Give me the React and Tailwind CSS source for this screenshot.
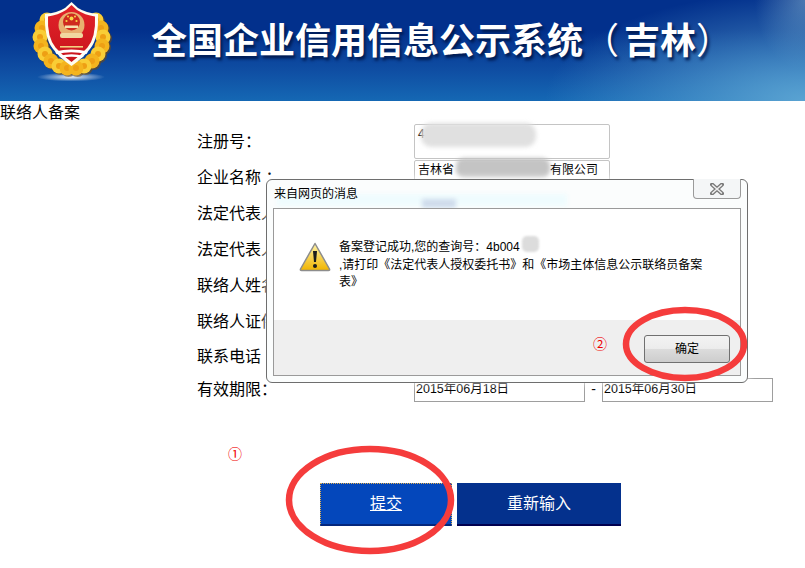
const fields = [
  { label: '注册号：', h: 'h-[36px]', box: 'h-[35px] self-start', text: '4' },
  { label: '企业名称 ：', h: 'h-[36px]', box: 'h-[34px] self-start', text: '吉林省' },
  { label: '法定代表人姓名：', h: 'h-[36px]', box: 'h-[26px]', text: '' },
  { label: '法定代表人证件号：', h: 'h-[36px]', box: 'h-[26px]', text: '' },
  { label: '联络人姓名：', h: 'h-[36px]', box: 'h-[26px]', text: '' },
  { label: '联络人证件号：', h: 'h-[36px]', box: 'h-[26px]', text: '' },
  { label: '联系电话', h: 'h-[34px]', box: 'h-[26px]', text: '' },
]

function Emblem() {
  const leaves = [
    [47, 20], [42, 28], [40, 37], [41, 46], [45, 54], [51, 61], [59, 66], [67, 68],
    [96, 20], [101, 28], [103, 37], [102, 46], [98, 54], [92, 61], [84, 66], [76, 68],
  ]
  return (
    <svg width="150" height="101" viewBox="0 0 150 101" className="shrink-0">
      <defs>
        <radialGradient id="glow">
          <stop offset="0%" stopColor="#ffffff" stopOpacity="0.9" />
          <stop offset="100%" stopColor="#ffffff" stopOpacity="0" />
        </radialGradient>
        <linearGradient id="shield" x1="0" y1="0" x2="0" y2="1">
          <stop offset="0%" stopColor="#e2232a" />
          <stop offset="100%" stopColor="#c8141c" />
        </linearGradient>
      </defs>
      <ellipse cx="71" cy="77" rx="34" ry="4.5" fill="url(#glow)" />
      {leaves.map(([x, y], i) => (
        <circle key={i} cx={x + 1.5} cy={y + 1.5} r="7.5" fill="#7a4a08" opacity="0.55" />
      ))}
      {leaves.map(([x, y], i) => (
        <g key={i}>
          <circle cx={x} cy={y} r="7.5" fill={i % 2 ? '#f4b41e' : '#f9cd36'} />
          <circle cx={x} cy={y} r="3" fill="#ee9f14" />
        </g>
      ))}
      <path d="M71.5 2 L78 8 Q86 13 98 14 Q99 38 90 49 Q82 59 71.5 66 Q61 59 53 49 Q44 38 45 14 Q57 13 65 8 Z" fill="#fffdf0" />
      <path d="M71.5 5 L77 10 Q85 15 95 16.5 Q96 37 87.5 47.5 Q80 56 71.5 62 Q63 56 55.5 47.5 Q47 37 48 16.5 Q58 15 66 10 Z" fill="url(#shield)" />
      <circle cx="71.5" cy="25" r="13" fill="#e8b070" />
      <circle cx="71.5" cy="22" r="8.5" fill="#cf2a1e" />
      <circle cx="71.5" cy="18.5" r="2" fill="#f8d84a" />
      <circle cx="66.5" cy="21" r="1.1" fill="#f8d84a" />
      <circle cx="76.5" cy="21" r="1.1" fill="#f8d84a" />
      <circle cx="68" cy="16.5" r="1" fill="#f8d84a" />
      <circle cx="75" cy="16.5" r="1" fill="#f8d84a" />
      <rect x="65" y="25.5" width="13" height="2.5" fill="#f6e2b0" />
      <rect x="60" y="33" width="23" height="5" rx="2" fill="#f1d8a0" />
      <rect x="60" y="46" width="23" height="1.6" fill="#f4d080" />
      <path d="M55 51.5 Q71.5 47.5 88 51.5 L86.5 54 Q71.5 50.5 56.5 54 Z" fill="#fff" />
      <path d="M59 56 Q71.5 52.5 84 56 L81.5 58 Q71.5 55.5 61.5 58 Z" fill="#fff" />
    </svg>
  )
}

function WarningIcon() {
  return (
    <svg width="32" height="30" viewBox="0 0 32 30" className="shrink-0">
      <defs>
        <linearGradient id="warn" x1="0" y1="0" x2="0" y2="1">
          <stop offset="0%" stopColor="#fff3a8" />
          <stop offset="100%" stopColor="#f0b400" />
        </linearGradient>
      </defs>
      <path d="M16 1.5 L30.5 27 Q31 28.5 29.5 28.5 L2.5 28.5 Q1 28.5 1.5 27 Z" fill="url(#warn)" stroke="#8d8d8d" strokeWidth="1.5" strokeLinejoin="round" />
      <path d="M14 9 L18 9 L17 20 L15 20 Z" fill="#1c1c1c" />
      <circle cx="16" cy="24" r="2" fill="#1c1c1c" />
    </svg>
  )
}

function CloseIcon() {
  return (
    <svg width="14" height="12" viewBox="0 0 14 12">
      <path d="M2 1.5 L12 10.5 M12 1.5 L2 10.5" stroke="#777" strokeWidth="4" strokeLinecap="round" />
      <path d="M2.5 2 L11.5 10 M11.5 2 L2.5 10" stroke="#eee" strokeWidth="1.6" strokeLinecap="round" />
    </svg>
  )
}

function Dialog() {
  return (
    <div className="absolute left-[266px] top-[179px] w-[482px] h-[204px] rounded-[6px] border border-[#6e6e6e] bg-[#fbfdfd] shadow-[0_0_8px_rgba(255,255,255,0.9)] flex flex-col px-[6px] pb-[6px]">
      {/* 玻璃边框透出的底色 */}
      <span className="absolute left-[10px] top-[14px] w-[290px] h-[12px] bg-[#effcfe] blur-[2px]"></span>
      <span className="absolute left-[155px] top-[19px] w-[34px] h-[9px] bg-[#cfdcec] blur-[2px]"></span>
      <div className="relative h-[28px] flex items-start justify-between">
        <span className="text-[12px] leading-[16px] mt-[6px] ml-px text-black">来自网页的消息</span>
        <div className="w-[48px] h-[20px] -mt-px border border-t-0 border-[#9a9a9a] rounded-b-[4px] bg-[#f4f6f7] flex items-center justify-center">
          <CloseIcon />
        </div>
      </div>
      <div className="relative flex-1 border border-[#9a9a9a] bg-white flex flex-col">
        <div className="h-[111px] flex items-start pl-[25px] pt-[33px] gap-[8px]">
          <WarningIcon />
          <p className="text-[12px] leading-[17.5px] text-black relative -mt-[3px]">
            备案登记成功,您的查询号：4b004
            <span className="absolute left-[183px] top-[-3px] w-[17px] h-[16px] rounded-[5px] bg-[#dcdcdc] blur-[1px]"></span>
            <br />
            ,请打印《法定代表人授权委托书》和《市场主体信息公示联络员备案
            <br />
            表》
          </p>
        </div>
        <div className="flex-1 bg-[#efefef] flex items-center justify-end pr-[10px] pt-[2px] gap-[37px]">
          <span className="text-[14px] leading-none text-[#f00000] -mt-[10px]">②</span>
          <button className="w-[86px] h-[28px] rounded-[3px] border border-[#707070] bg-[linear-gradient(#f3f3f3_0%,#ececec_48%,#dcdcdc_50%,#cdcdcd_100%)] text-[12px] text-black">
            确定
          </button>
        </div>
      </div>
    </div>
  )
}

export default function App() {
  return (
    <div className="relative w-[805px] h-[568px] overflow-hidden bg-white text-black font-['Liberation_Sans','Noto_Sans_CJK_SC',sans-serif]">
      {/* 顶部横幅 */}
      <div className="h-[101px] flex items-center bg-[radial-gradient(ellipse_260px_110px_at_100%_100%,#5aa3d2_0%,rgba(90,163,210,0)_100%),radial-gradient(ellipse_50px_70px_at_100%_0%,#4a74ae_0%,rgba(74,116,174,0)_100%),linear-gradient(180deg,#02308c_0%,#02308c_30%,#0f4ea3_70%,#1568b4_100%)]">
        <Emblem />
        <h1 className="ml-[1px] -mt-[18px] text-[36px] leading-[44px] font-bold text-white whitespace-nowrap [text-shadow:2px_3px_3px_#001a50]">
          全国企业信用信息公示系统<span className="font-normal">（</span><span className="ml-[5px]">吉林</span><span className="font-normal">）</span>
        </h1>
      </div>

      <div className="h-[23px] text-[16px] leading-[23px]">联络人备案</div>

      {/* 表单 */}
      <div className="pl-[197px]">
        {fields.map((f) => (
          <div key={f.label} className={`flex items-center ${f.h}`}>
            <div className="w-[217px] text-[16px] whitespace-nowrap">{f.label}</div>
            <div className={`relative w-[196px] border border-[#c4c4c4] rounded-[2px] px-[3px] text-[12px] leading-[18px] ${f.box}`}>
              {f.text}
              {f.text === '4' && (
                <span className="absolute left-[6px] top-[-2px] w-[115px] h-[24px] rounded-[10px] bg-[#e0e0e0] blur-[2px]"></span>
              )}
              {f.text === '吉林省' && (
                <>
                  <span className="absolute left-[41px] top-[-3px] w-[94px] h-[20px] rounded-[8px] bg-[#c4c4c4] blur-[2px]"></span>
                  <span className="absolute left-[135px] top-0">有限公司</span>
                </>
              )}
            </div>
          </div>
        ))}
        <div className="flex items-center h-[31px]">
          <div className="w-[217px] text-[16px]">有效期限：</div>
          <div className="w-[171px] h-[24px] mt-[1px] border border-[#9e9e9e] px-px pt-px text-[12.5px] leading-[18px]">2015年06月18日</div>
          <div className="w-[17px] text-center text-[14px]">-</div>
          <div className="w-[171px] h-[24px] mt-[1px] border border-[#9e9e9e] px-px pt-px text-[12.5px] leading-[18px]">2015年06月30日</div>
        </div>
      </div>

      <div className="pl-[228px] mt-[39px] h-[39px] text-[14px] leading-[20px] text-[#f00000]">①</div>

      {/* 按钮 */}
      <div className="flex pl-[320px] gap-[5px]">
        <button className="w-[132px] h-[43px] bg-[#0447bb] border border-dotted border-[#e0b050] border-b-2 [border-bottom-style:solid] border-b-[#04277d] text-[16px] text-white underline">
          提交
        </button>
        <button className="w-[164px] h-[43px] bg-[#04318d] border-b-2 border-[#00004f] text-[16px] text-white">
          重新输入
        </button>
      </div>

      <Dialog />

      {/* 红色圈注 */}
      <svg className="absolute inset-0 pointer-events-none" width="805" height="568">
        <ellipse cx="370" cy="500" rx="81" ry="51" fill="none" stroke="#f53c3c" strokeWidth="6.5" />
        <ellipse cx="685" cy="344" rx="59" ry="34" fill="none" stroke="#f53c3c" strokeWidth="6.5" />
      </svg>
    </div>
  )
}
